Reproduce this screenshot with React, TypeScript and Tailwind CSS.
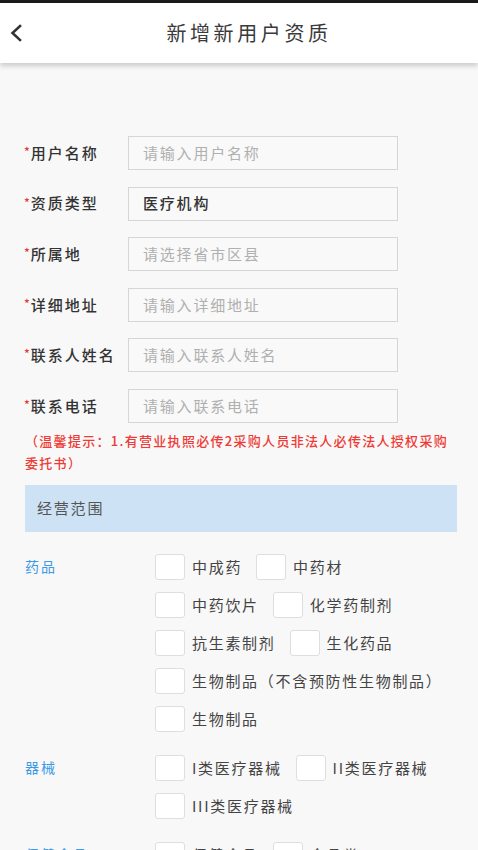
import React from 'react';

const fields = [
    { label: '用户名称', placeholder: '请输入用户名称' },
    { label: '资质类型', value: '医疗机构' },
    { label: '所属地', placeholder: '请选择省市区县' },
    { label: '详细地址', placeholder: '请输入详细地址' },
    { label: '联系人姓名', placeholder: '请输入联系人姓名' },
    { label: '联系电话', placeholder: '请输入联系电话' },
];

const groups = [
    {
        name: '药品',
        items: ['中成药', '中药材', '中药饮片', '化学药制剂', '抗生素制剂', '生化药品', '生物制品（不含预防性生物制品）', '生物制品'],
    },
    {
        name: '器械',
        items: ['I类医疗器械', 'II类医疗器械', 'III类医疗器械'],
    },
    {
        name: '保健食品',
        items: ['保健食品', '食品类'],
    },
];

const font = { fontFamily: '"Noto Sans CJK SC", "Noto Sans", sans-serif' };

export default function App() {
    return (
        <div className="w-[478px] h-[850px] overflow-hidden bg-[#f8f8f8]" style={font}>
            <div className="h-[3px] bg-[#1a1a1a]" />
            {/* 顶部导航 */}
            <div className="relative h-[60px] bg-white shadow-[0_3px_5px_rgba(0,0,0,0.18)] flex items-center">
                <div className="w-[50px] pl-[9px] flex items-center">
                    <svg width="14" height="18" viewBox="0 0 14 18" fill="none">
                        <path d="M11 2 L3.5 9 L11 16" stroke="#333" strokeWidth="2.6" strokeLinecap="square" />
                    </svg>
                </div>
                <div className="flex-1 flex justify-center pr-[30px]">
                    <span className="text-[20px] tracking-[3.6px] text-[#3a3a3a]">新增新用户资质</span>
                </div>
            </div>

            <div className="px-[25px]">
                <div className="mt-[73px] flex flex-col gap-[16.6px]">
                    {fields.map((f) => (
                        <div key={f.label} className="flex items-center h-[34px]">
                            <div className="w-[103px] shrink-0 flex items-center text-[15px] tracking-[2px] text-[#333] font-medium">
                                <span className="text-[#e53935] text-[12px] tracking-normal -ml-px mr-[1px] -mt-[4px]">*</span>
                                {f.label}
                            </div>
                            <div className="w-[270px] h-[34px] border border-[#d6d6d6] bg-[#f9f9f9] flex items-center pl-[14px]">
                                {f.value ? (
                                    <span className="text-[15px] tracking-[1.8px] text-[#333] font-medium">{f.value}</span>
                                ) : (
                                    <span className="text-[15px] tracking-[1.8px] text-[#b0b0b0]">{f.placeholder}</span>
                                )}
                            </div>
                        </div>
                    ))}
                </div>

                <p className="mt-[7px] text-[13px] leading-[22.5px] tracking-[1.3px] text-[#ee3b36] font-medium w-[428px]">
                    （温馨提示：1.有营业执照必传2采购人员非法人必传法人授权采购委托书）
                </p>

                <div className="mt-[10px] h-[47px] w-[432px] bg-[#cde3f5] flex items-center pl-[12px]">
                    <span className="text-[15px] tracking-[1.8px] text-[#555]">经营范围</span>
                </div>

                <div className="mt-[22px] flex flex-col gap-[23px]">
                    {groups.map((g) => (
                        <div key={g.name} className="flex items-start">
                            <div className="w-[130px] shrink-0 h-[26px] flex items-center text-[14px] tracking-[2px] text-[#3d9be6]">
                                {g.name}
                            </div>
                            <div className="w-[298px] flex flex-wrap gap-y-[12px]">
                                {g.items.map((item) => (
                                    <label key={item} className="flex items-center mr-[14px]">
                                        <span className="w-[30px] h-[26px] rounded-[3px] border border-[#dedede] bg-white" />
                                        <span className="ml-[7px] text-[15px] tracking-[1.7px] text-[#444] whitespace-nowrap">{item}</span>
                                    </label>
                                ))}
                            </div>
                        </div>
                    ))}
                </div>
            </div>
        </div>
    );
}
